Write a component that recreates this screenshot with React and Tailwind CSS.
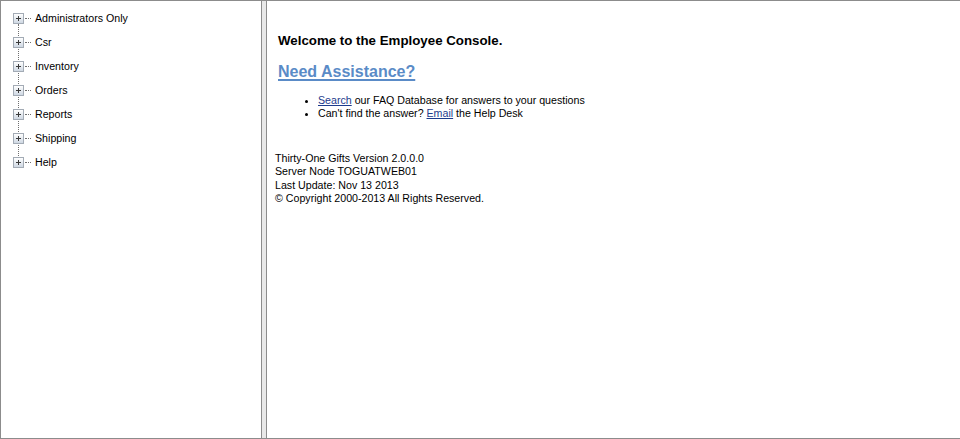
import React from 'react';

const items = ['Administrators Only', 'Csr', 'Inventory', 'Orders', 'Reports', 'Shipping', 'Help'];

const PlusBox = () => (
  <div className="relative w-[11px] h-[11px] border border-[#a3abb5] bg-gradient-to-b from-[#ffffff] to-[#cfd8e3] shrink-0">
    <div className="absolute left-[2px] top-[4px] w-[5px] h-px bg-[#3a3a3a]" />
    <div className="absolute left-[4px] top-[2px] w-px h-[5px] bg-[#3a3a3a]" />
  </div>
);

export default function App() {
  return (
    <div className="flex w-[960px] h-[439px] border-t border-l border-b border-[#8c8c8c] bg-white text-black font-['Liberation_Sans',Arial,sans-serif] text-[10.65px]">
      <div className="w-[261px] shrink-0 border-r border-[#8c8c8c]">
        <div className="relative pt-[5px] pl-[12px]">
          <div className="absolute left-[17px] top-[23px] h-[144px] border-l border-dotted border-[#6f6f6f]" />
          {items.map((item, index) => (
            <div key={index} className="relative flex items-center h-[24px]">
              <PlusBox />
              <div className="w-[6px] ml-[1px] mr-[4px] border-t border-dotted border-[#6f6f6f]" />
              <span className="leading-none">{item}</span>
            </div>
          ))}
        </div>
      </div>
      <div className="w-[4px] shrink-0 bg-[#e8e8e8]" />
      <div className="flex-1 border-l border-[#8c8c8c] pl-[8px]">
        <div className="pl-[3px] pt-[32px]">
          <h1 className="text-[13.3px] font-bold leading-[16px]">Welcome to the Employee Console.</h1>
          <a href="#" className="inline-block mt-[13px] text-[16px] font-bold leading-[20px] text-[#5a8bc7] underline decoration-2 underline-offset-2">
            Need Assistance?
          </a>
          <ul className="list-disc pl-[40px] mt-[12px] leading-[13px]">
            <li>
              <a href="#" className="text-[#1e3c8c] underline">Search</a> our FAQ Database for answers to your questions
            </li>
            <li>
              Can't find the answer? <a href="#" className="text-[#1e3c8c] underline">Email</a> the Help Desk
            </li>
          </ul>
        </div>
        <div className="mt-[32px] leading-[13.33px]">
          <p>Thirty-One Gifts Version 2.0.0.0</p>
          <p>Server Node TOGUATWEB01</p>
          <p>Last Update: Nov 13 2013</p>
          <p>© Copyright 2000-2013 All Rights Reserved.</p>
        </div>
      </div>
    </div>
  );
}
